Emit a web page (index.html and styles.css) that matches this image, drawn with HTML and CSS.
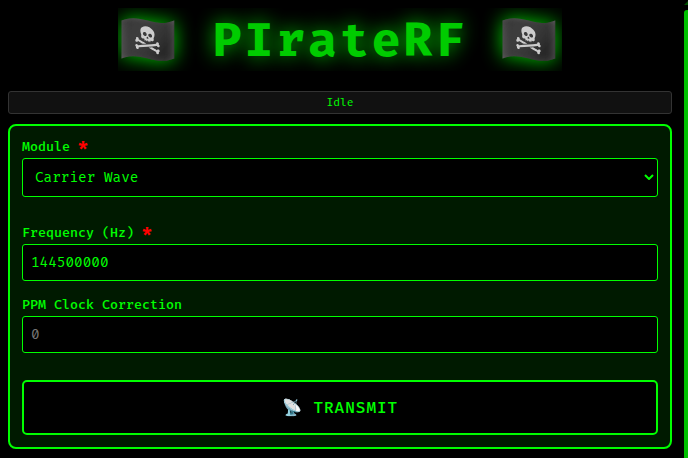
FILE: index.html
```
<!DOCTYPE html>
<html lang="en">
<head>
<meta charset="utf-8">
<meta name="viewport" content="width=device-width, initial-scale=1">
<title>PIrateRF</title>
<link rel="stylesheet" href="styles.css">
</head>
<body>
<main class="page">
  <h1 class="title">🏴‍☠️ PIrateRF 🏴‍☠️</h1>
  <div class="status" role="status">Idle</div>
  <form class="panel">
    <div class="group">
      <div class="field">
        <label for="module">Module <span class="required">*</span></label>
        <div class="select-wrap">
          <select id="module" required><option>Carrier Wave</option></select>
          <svg class="chevron" viewBox="0 0 10 6" aria-hidden="true"><path d="M1 1l4 4 4-4"/></svg>
        </div>
      </div>
    </div>
    <div class="group">
      <div class="field">
        <label for="frequency">Frequency (Hz) <span class="required">*</span></label>
        <input id="frequency" type="text" inputmode="numeric" value="144500000" required>
      </div>
      <div class="field">
        <label for="ppm">PPM Clock Correction</label>
        <input id="ppm" type="text" inputmode="decimal" placeholder="0">
      </div>
    </div>
    <button class="transmit" type="button">📡 TRANSMIT</button>
  </form>
</main>
<div class="rail" aria-hidden="true">
  <svg class="rail-arrow" viewBox="0 0 4 4"><path d="M0 4L4 0v4z"/></svg>
  <div class="rail-thumb"></div>
</div>
</body>
</html>
```
FILE: styles.css
```
* {
  box-sizing: border-box;
}

body {
  margin: 0;
  background: #000;
  color: #0f0;
  font-family: "Fira Code", "Fira Mono", "DejaVu Sans Mono", monospace;
  font-size: 14px;
}

.page {
  display: flex;
  flex-direction: column;
  padding: 8px 16px 8px 8px;
}

.title {
  align-self: center;
  margin: 0 0 20px;
  padding-top: 2px;
  overflow: hidden;
  font-family: "Fira Mono", "Fira Code", "DejaVu Sans Mono", monospace;
  font-size: 48px;
  line-height: 61px;
  letter-spacing: 3px;
  white-space: nowrap;
  text-shadow: 0 0 20px #0f0;
  opacity: 0.8;
}

.status {
  margin-bottom: 10px;
  padding: 3px;
  border: 1px solid #333;
  border-radius: 3px;
  background: #111;
  font-size: 11px;
  line-height: 15px;
  text-align: center;
}

.panel {
  padding: 12px;
  border: 2px solid #0f0;
  border-radius: 8px;
  background: #001a00;
}

.group {
  margin-bottom: 12px;
}

.field {
  padding-bottom: 15px;
}

label {
  display: block;
  margin-bottom: 2px;
  font-size: 13px;
  font-weight: 500;
  line-height: 18px;
}

.required {
  color: #f00;
  font-size: 16px;
  font-weight: bold;
  line-height: 1;
}

input,
select {
  display: block;
  width: 100%;
  margin: 0;
  border: 1px solid #0f0;
  border-radius: 3px;
  background: #000;
  color: #0f0;
  font: inherit;
  line-height: 19px;
}

input {
  padding: 8px;
}

select {
  padding: 9px 12px;
  appearance: none;
}

input::placeholder {
  color: #757575;
}

.select-wrap {
  position: relative;
}

.chevron {
  position: absolute;
  top: 16px;
  right: 4px;
  width: 10px;
  height: 6px;
  fill: none;
  stroke: #0f0;
  stroke-width: 2;
}

.transmit {
  display: block;
  width: 100%;
  padding: 15px;
  border: 2px solid #0f0;
  border-radius: 5px;
  background: #000;
  color: #0f0;
  font: 500 16px/21px "Fira Mono", "Fira Code", "DejaVu Sans Mono", monospace;
  letter-spacing: 1px;
}

.rail {
  position: fixed;
  top: 0;
  right: 0;
  bottom: 0;
  display: flex;
  flex-direction: column;
  width: 4px;
  padding-top: 1px;
}

.rail-arrow {
  width: 4px;
  height: 4px;
  margin-bottom: 5px;
  fill: #005000;
}

.rail-thumb {
  flex: 1;
  border-radius: 3px 0 0;
  background: #00c000;
}
```
